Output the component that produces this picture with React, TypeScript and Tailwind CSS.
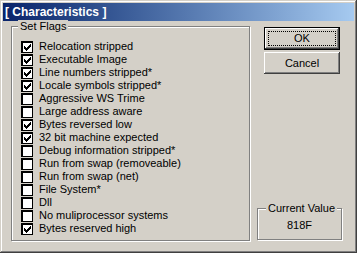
import React from "react";

const flags: [string, boolean][] = [
  ["Relocation stripped", true],
  ["Executable Image", true],
  ["Line numbers stripped*", true],
  ["Locale symbols stripped*", true],
  ["Aggressive WS Trime", false],
  ["Large address aware", false],
  ["Bytes reversed low", true],
  ["32 bit machine expected", true],
  ["Debug information stripped*", false],
  ["Run from swap (removeable)", false],
  ["Run from swap (net)", false],
  ["File System*", false],
  ["Dll", false],
  ["No muliprocessor systems", false],
  ["Bytes reserved high", true],
];

const checkPixels = [
  [6, 0], [5, 1], [6, 1], [0, 2], [4, 2], [5, 2], [6, 2],
  [0, 3], [1, 3], [3, 3], [4, 3], [5, 3],
  [0, 4], [1, 4], [2, 4], [3, 4], [4, 4],
  [1, 5], [2, 5], [3, 5], [2, 6],
];

function CheckBox({ checked }: { checked: boolean }) {
  return (
    <div className="w-[12px] h-[12px] bg-white border-t-2 border-l-2 border-r border-b border-black flex items-center justify-center shrink-0">
      {checked && (
        <svg width="7" height="7" viewBox="0 0 7 7" shapeRendering="crispEdges">
          {checkPixels.map(([x, y]) => (
            <rect key={`${x}-${y}`} x={x} y={y} width="1" height="1" fill="#000" />
          ))}
        </svg>
      )}
    </div>
  );
}

export default function App() {
  const font = { fontFamily: '"Liberation Sans", Arial, sans-serif' };
  return (
    <div
      className="w-[357px] h-[253px] bg-[#d4d0c8] p-[3px] flex flex-col text-black text-[11px] leading-none shadow-[inset_-1px_-1px_#404040,inset_1px_1px_#d4d0c8,inset_-2px_-2px_#808080,inset_2px_2px_#ffffff]"
      style={font}
    >
      <div className="h-[18px] bg-gradient-to-r from-[#0a246a] to-[#a6caf0] flex items-center pl-[2px] shrink-0">
        <span className="text-white font-bold text-[12px] leading-none">[ Characteristics ]</span>
      </div>
      <div className="flex flex-row">
        <div className="relative ml-[8px] mt-[5px] w-[239px] h-[215px] border border-[#808080] shadow-[inset_1px_1px_#ffffff,1px_1px_#ffffff]">
          <div className="absolute left-[6px] top-[-7px] px-[2px] bg-[#d4d0c8] text-[11px] leading-[13px]">Set Flags</div>
          <div className="pl-[9px] pt-[13px] flex flex-col">
            {flags.map(([label, checked], i) => (
              <div key={i} className="flex items-center h-[13px] gap-[6px]">
                <CheckBox checked={checked} />
                <span className="whitespace-nowrap">{label}</span>
              </div>
            ))}
          </div>
        </div>
        <div className="ml-[7px] w-[86px] flex flex-col">
          <div className="ml-[7px] mt-[6px] w-[76px] h-[23px] border border-black bg-[#d4d0c8] shadow-[inset_-1px_-1px_#404040,inset_1px_1px_#ffffff,inset_-2px_-2px_#808080] flex items-center justify-center p-[3px]">
            <div className="w-full h-full border border-dotted border-black flex items-center justify-center">OK</div>
          </div>
          <div className="ml-[7px] mt-[2px] w-[76px] h-[22px] bg-[#d4d0c8] shadow-[inset_-1px_-1px_#404040,inset_1px_1px_#ffffff,inset_-2px_-2px_#808080] flex items-center justify-center">
            Cancel
          </div>
          <div className="relative mt-[134px] w-[85px] h-[32px] border border-[#808080] shadow-[inset_1px_1px_#ffffff,1px_1px_#ffffff] flex items-center justify-center pt-[2px]">
            <div className="absolute left-[8px] top-[-7px] px-[2px] bg-[#d4d0c8] leading-[13px] whitespace-nowrap">Current Value</div>
            <span>818F</span>
          </div>
        </div>
      </div>
    </div>
  );
}
